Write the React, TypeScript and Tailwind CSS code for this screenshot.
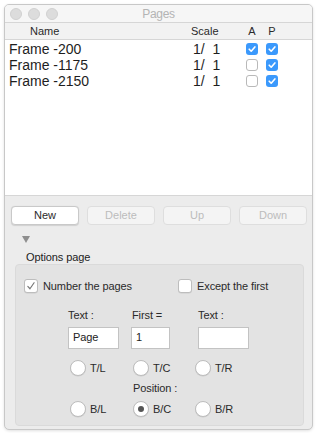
import React from "react";

const font = { fontFamily: '"Liberation Sans", Arial, sans-serif' };

function BlueCheck({ on }: { on: boolean }) {
  return on ? (
    <div className="w-[12px] h-[12px] rounded-[3px] bg-[#3b99fc] flex items-center justify-center">
      <svg viewBox="0 0 12 12" className="w-[12px] h-[12px]">
        <path d="M3.2 6.2 L5.2 8.2 L8.9 3.9" fill="none" stroke="#fff" strokeWidth="1.6" strokeLinecap="round" strokeLinejoin="round" />
      </svg>
    </div>
  ) : (
    <div className="w-[12px] h-[12px] rounded-[3px] bg-white border border-[#b9b9b9]" />
  );
}

function GrayBox({ on }: { on: boolean }) {
  return (
    <div className="w-[14px] h-[14px] rounded-[3px] bg-white border border-[#bdbdbd] flex items-center justify-center shadow-[0_0.5px_0.5px_rgba(0,0,0,0.1)]">
      {on && (
        <svg viewBox="0 0 14 14" className="w-[14px] h-[14px]">
          <path d="M3.3 7.4 L5.8 10.2 L10.6 3.2" fill="none" stroke="#7a7a7a" strokeWidth="1.4" strokeLinecap="round" strokeLinejoin="round" />
        </svg>
      )}
    </div>
  );
}

function Radio({ label, on, cls }: { label: string; on?: boolean; cls: string }) {
  return (
    <div className={`flex items-center ${cls}`}>
      <div className="w-[16px] h-[16px] rounded-full bg-white border border-[#bdbdbd] flex items-center justify-center shadow-[0_0.5px_0.5px_rgba(0,0,0,0.1)]">
        {on && <div className="w-[6px] h-[6px] rounded-full bg-[#555]" />}
      </div>
      <span className="ml-[4px] text-[11px] tracking-[-0.1px] text-[#2a2a2a]">{label}</span>
    </div>
  );
}

const rows = [
  { name: "Frame -200", a: true, p: true },
  { name: "Frame -1175", a: false, p: true },
  { name: "Frame -2150", a: false, p: true },
];

export default function App() {
  return (
    <div className="w-[317px] h-[433px] bg-white pt-[4px] pl-[4px]" style={font}>
      <div className="w-[309px] h-[426px] rounded-[5px] border border-[#c8c8c8] shadow-[0_1px_3px_rgba(0,0,0,0.12)] overflow-hidden flex flex-col bg-[#ececec]">
        {/* Title bar */}
        <div className="relative h-[17px] bg-[#f6f6f6] flex items-center pl-[5px] gap-[6px] shrink-0">
          <div className="w-[12px] h-[12px] rounded-full bg-[#dcdcdc] border border-[#d0d0d0]" />
          <div className="w-[12px] h-[12px] rounded-full bg-[#dcdcdc] border border-[#d0d0d0]" />
          <div className="w-[12px] h-[12px] rounded-full bg-[#dcdcdc] border border-[#d0d0d0]" />
          <div className="absolute inset-0 flex items-center justify-center text-[12px] tracking-[-0.3px] text-[#b4b4b4]">Pages</div>
        </div>
        {/* Header */}
        <div className="h-[18px] shrink-0 bg-[#f2f2f2] border-t border-b border-[#d6d6d6] flex items-center text-[11px] text-[#2a2a2a]">
          <div className="w-[186px] pl-[25px]">Name</div>
          <div className="w-[51px]">Scale</div>
          <div className="w-[20px] text-center">A</div>
          <div className="w-[20px] text-center">P</div>
        </div>
        {/* List */}
        <div className="h-[156px] shrink-0 bg-white pt-[1px] border-b border-[#d6d6d6]">
          {rows.map((r) => (
            <div key={r.name} className="h-[16px] flex items-center text-[14px] text-[#1e1e1e]">
              <div className="w-[186px] pl-[4px]">{r.name}</div>
              <div className="w-[51px] pl-[2px] whitespace-pre">{"1/  1"}</div>
              <div className="w-[20px] flex justify-center">
                <BlueCheck on={r.a} />
              </div>
              <div className="w-[20px] flex justify-center">
                <BlueCheck on={r.p} />
              </div>
            </div>
          ))}
        </div>
        {/* Bottom */}
        <div className="flex-1 flex flex-col">
          <div className="flex gap-[8px] pl-[6px] pt-[10px]">
            <div className="w-[68px] h-[19px] rounded-[4px] bg-white border border-[#c9c9c9] shadow-[0_0.5px_1px_rgba(0,0,0,0.12)] flex items-center justify-center text-[11px] text-[#2a2a2a]">New</div>
            <div className="w-[68px] h-[19px] rounded-[4px] bg-[#f4f4f4] border border-[#dedede] flex items-center justify-center text-[11px] text-[#bcbcbc]">Delete</div>
            <div className="w-[68px] h-[19px] rounded-[4px] bg-[#f4f4f4] border border-[#dedede] flex items-center justify-center text-[11px] text-[#bcbcbc]">Up</div>
            <div className="w-[68px] h-[19px] rounded-[4px] bg-[#f4f4f4] border border-[#dedede] flex items-center justify-center text-[11px] text-[#bcbcbc]">Down</div>
          </div>
          <div className="pl-[17px] mt-[11px]">
            <svg width="8" height="7" viewBox="0 0 8 7" className="block">
              <path d="M0 0 L8 0 L4 7 Z" fill="#8e8e8e" />
            </svg>
          </div>
          <div className="pl-[21px] mt-[8px] text-[11px] leading-[13px] tracking-[-0.1px] text-[#222]">Options page</div>
          <div className="ml-[10px] w-[289px] h-[162px] rounded-[4px] bg-[#e3e3e3] border border-[#dadada] flex flex-col text-[11px] tracking-[-0.1px] text-[#2a2a2a]">
            <div className="flex items-center pt-[13px]">
              <div className="w-[162px] pl-[8px] flex items-center">
                <GrayBox on={true} />
                <span className="ml-[5px]">Number the pages</span>
              </div>
              <GrayBox on={false} />
              <span className="ml-[5px]">Except the first</span>
            </div>
            <div className="flex items-center mt-[13px] leading-[14px]">
              <span className="ml-[52px] w-[64px]">Text :</span>
              <span className="w-[66px]">First =</span>
              <span>Text :</span>
            </div>
            <div className="flex mt-[5px]">
              <div className="ml-[52px] w-[51px] h-[22px] bg-white border border-[#c3c3c3] flex items-center pl-[4px] text-[#222]">Page</div>
              <div className="ml-[12px] w-[39px] h-[22px] bg-white border border-[#c3c3c3] flex items-center pl-[4px] text-[#222]">1</div>
              <div className="ml-[28px] w-[51px] h-[22px] bg-white border border-[#c3c3c3]" />
            </div>
            <div className="flex mt-[11px]">
              <Radio label="T/L" cls="ml-[54px] w-[63px]" />
              <Radio label="T/C" cls="w-[62px]" />
              <Radio label="T/R" cls="" />
            </div>
            <div className="mt-[5px] ml-[117px] leading-[14px]">Position :</div>
            <div className="flex mt-[6px]">
              <Radio label="B/L" cls="ml-[54px] w-[63px]" />
              <Radio label="B/C" on cls="w-[62px]" />
              <Radio label="B/R" cls="" />
            </div>
          </div>
        </div>
      </div>
    </div>
  );
}
